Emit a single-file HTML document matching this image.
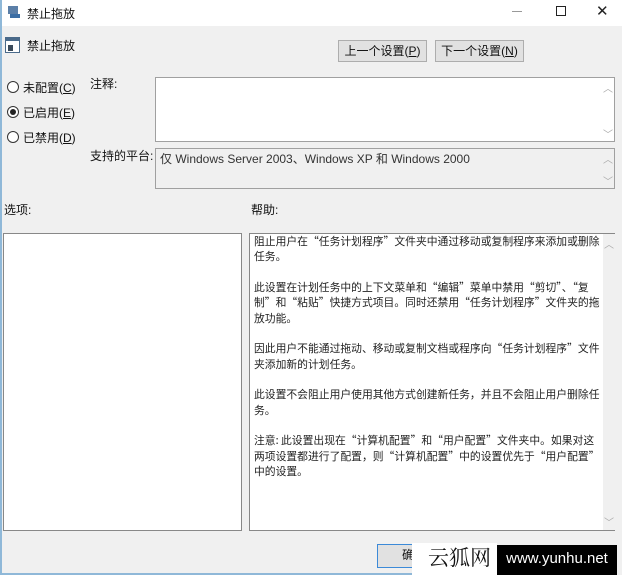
<!DOCTYPE html>
<html><head><meta charset="utf-8"><style>
*{margin:0;padding:0;box-sizing:border-box}
body{width:622px;height:575px;overflow:hidden;background:#f0f0f0;font-family:"Liberation Sans","Noto Sans CJK SC",sans-serif;font-size:12px;color:#111;position:relative}
.a{position:absolute;white-space:nowrap}
.title{left:0;top:0;width:622px;height:26px;background:#fff}
.box{position:absolute;border:1px solid #a0a0a0;background:#fff}
.btn{position:absolute;border:1px solid #adadad;background:#e1e1e1;text-align:center;line-height:20px;font-size:12px}
.rad{position:absolute;width:12px;height:12px;border:1px solid #333;border-radius:50%;background:#fff}
.arr{position:absolute;color:#aaa;font-size:10px}
.help{left:254px;top:234px;line-height:15.35px;font-size:10.8px;color:#222;font-family:"Noto Sans CJK SC","Liberation Sans",sans-serif}
</style></head><body>
<div class="a title"></div>
<div class="a" style="left:0;top:0;width:2px;height:575px;background:#8fb8d8"></div>
<svg class="a" style="left:7px;top:5px" width="14" height="14"><rect x="1" y="1" width="10" height="8" fill="#5b7fa8"/><rect x="3" y="9" width="10" height="4" fill="#3b6ea5"/></svg>
<div class="a" style="left:27px;top:5px;font-size:12px">禁止拖放</div>
<div class="a" style="left:512px;top:11px;width:10px;height:1px;background:#999"></div>
<div class="a" style="left:556px;top:6px;width:10px;height:10px;border:1px solid #222"></div>
<div class="a" style="left:596px;top:2px;font-size:15px;color:#222">✕</div>
<svg class="a" style="left:5px;top:37px" width="15" height="16"><rect x="0.5" y="0.5" width="14" height="15" fill="#fff" stroke="#4a6a8a"/><rect x="1" y="1" width="13" height="3" fill="#4a6a8a"/><rect x="3" y="8" width="5" height="6" fill="#3a4a5a"/></svg>
<div class="a" style="left:27px;top:37px">禁止拖放</div>
<div class="btn" style="left:338px;top:40px;width:89px;height:22px">上一个设置(<u>P</u>)</div>
<div class="btn" style="left:435px;top:40px;width:89px;height:22px">下一个设置(<u>N</u>)</div>
<div class="rad" style="left:7px;top:81px"></div><div class="a" style="left:23px;top:79px">未配置(<u>C</u>)</div>
<div class="rad" style="left:7px;top:106px"></div><div class="a" style="left:10px;top:109px;width:6px;height:6px;border-radius:50%;background:#222"></div><div class="a" style="left:23px;top:104px">已启用(<u>E</u>)</div>
<div class="rad" style="left:7px;top:131px"></div><div class="a" style="left:23px;top:129px">已禁用(<u>D</u>)</div>
<div class="a" style="left:90px;top:75px">注释:</div>
<div class="box" style="left:155px;top:77px;width:460px;height:65px"></div>
<div class="arr" style="left:603px;top:80px">︿</div><div class="arr" style="left:603px;top:126px">﹀</div>
<div class="a" style="left:90px;top:147px">支持的平台:</div>
<div class="box" style="left:155px;top:148px;width:460px;height:41px;background:#f0f0f0"></div>
<div class="a" style="left:160px;top:150px;color:#333">仅 Windows Server 2003、Windows XP 和 Windows 2000</div>
<div class="arr" style="left:603px;top:151px">︿</div><div class="arr" style="left:603px;top:173px">﹀</div>
<div class="a" style="left:4px;top:201px">选项:</div>
<div class="a" style="left:251px;top:201px">帮助:</div>
<div class="box" style="left:3px;top:233px;width:239px;height:298px;border-color:#888"></div>
<div class="box" style="left:249px;top:233px;width:366px;height:298px;border-color:#888"></div>
<div class="a" style="left:603px;top:234px;width:12px;height:296px;background:#f0f0f0"></div>
<div class="arr" style="left:604px;top:236px">︿</div><div class="arr" style="left:604px;top:514px">﹀</div>
<div class="a help">阻止用户在“任务计划程序”文件夹中通过移动或复制程序来添加或删除<br>任务。<br><br>此设置在计划任务中的上下文菜单和“编辑”菜单中禁用“剪切”、“复<br>制”和“粘贴”快捷方式项目。同时还禁用“任务计划程序”文件夹的拖<br>放功能。<br><br>因此用户不能通过拖动、移动或复制文档或程序向“任务计划程序”文件<br>夹添加新的计划任务。<br><br>此设置不会阻止用户使用其他方式创建新任务，并且不会阻止用户删除任<br>务。<br><br>注意: 此设置出现在“计算机配置”和“用户配置”文件夹中。如果对这<br>两项设置都进行了配置，则“计算机配置”中的设置优先于“用户配置”<br>中的设置。</div>
<div class="btn" style="left:377px;top:544px;width:74px;height:24px;border-color:#3c8ad8">确定</div>
<div class="a" style="left:412px;top:543px;width:85px;height:32px;background:#fff"></div>
<div class="a" style="left:428px;top:542px;font-size:21px;font-family:'Noto Serif CJK SC',serif;color:#111">云狐网</div>
<div class="a" style="left:497px;top:545px;width:120px;height:30px;background:#000;color:#fff;font-size:15px;line-height:28px;text-align:center">www.yunhu.net</div>
<div class="a" style="left:0;top:573px;width:412px;height:2px;background:#8fb8d8"></div>
</body></html>
